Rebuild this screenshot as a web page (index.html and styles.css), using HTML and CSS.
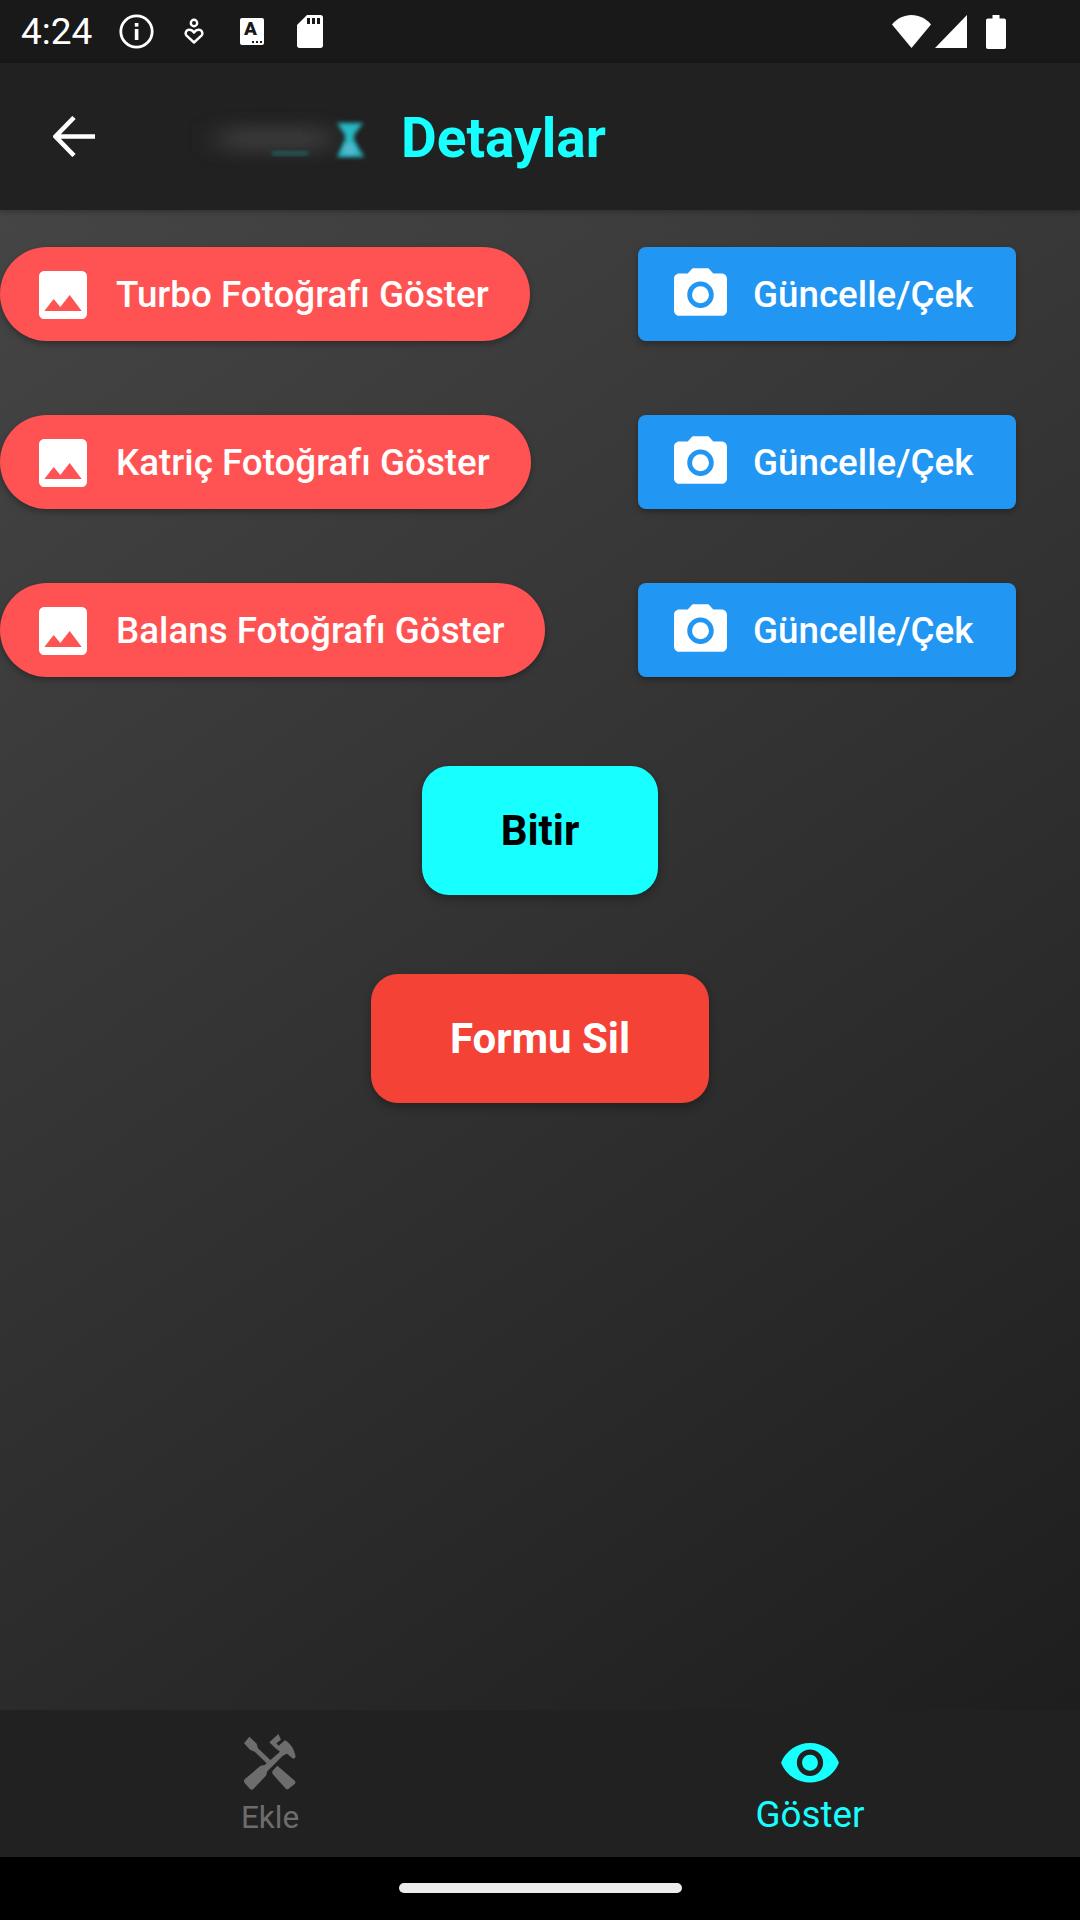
FILE: index.html
```html
<!DOCTYPE html>
<html lang="tr">
<head>
    <meta charset="UTF-8">
    <meta name="viewport" content="width=device-width, initial-scale=1.0">
    <title>Detaylar</title>
    <link rel="stylesheet" href="styles.css">
</head>
<body>
    <div class="app">
        <div class="status-bar">
            <span class="time">4:24</span>
            <svg class="st-info" viewBox="0 0 35 35"><circle cx="17.5" cy="17.5" r="15.7" fill="none" stroke="#fff" stroke-width="2.8"/><rect x="15.8" y="15" width="3.6" height="11" fill="#fff"/><rect x="15.8" y="9" width="3.6" height="3.6" fill="#fff"/></svg>
            <svg class="st-heart" viewBox="0 0 20 27"><circle cx="10" cy="5" r="3.2" fill="none" stroke="#fff" stroke-width="2.4"/><path d="M10 24.5L2.6 17.6C.6 15.6 2 11.8 5.2 11.8 7.4 11.8 9 13 10 14.6 11 13 12.6 11.8 14.8 11.8 18 11.8 19.4 15.6 17.4 17.6Z" fill="none" stroke="#fff" stroke-width="2.4" stroke-linejoin="round"/></svg>
            <div class="st-card">
                <span class="st-card-letter">A</span>
                <span class="st-card-dots"></span>
            </div>
            <svg class="st-sd" viewBox="0 0 26 33"><path d="M10 0H23.5C25 0 26 1 26 2.5V30.5C26 32 25 33 23.5 33H2.5C1 33 0 32 0 30.5V10Z" fill="#fff"/><rect x="10" y="3" width="3" height="6" fill="#191919"/><rect x="15" y="3" width="3" height="6" fill="#191919"/><rect x="20" y="3" width="3" height="6" fill="#191919"/></svg>
            <div class="status-right">
                <svg class="st-wifi" viewBox="0 0 39 33"><path d="M19.500 33L0 9.500C5 3.500 12 0 19.500 0S34 3.500 39 9.500Z" fill="#fff"/></svg>
                <svg class="st-signal" viewBox="0 0 32 33"><path d="M32 0V33H0Z" fill="#fff"/></svg>
                <svg class="st-battery" viewBox="0 0 20 34"><path d="M6.500 0H13.500V3.500H18C19.200 3.500 20 4.300 20 5.500V32C20 33.200 19.200 34 18 34H2C.8 34 0 33.200 0 32V5.500C0 4.300 .8 3.500 2 3.500H6.500Z" fill="#fff"/></svg>
            </div>
        </div>

        <header class="app-bar">
            <svg class="back" viewBox="0 0 42 41"><path d="M42 20.500H3M21 1.500L2.500 20.500 21 39.500" fill="none" stroke="#fff" stroke-width="4.600"/></svg>
            <!-- logo is blurred out in the original -->
            <svg class="logo" viewBox="0 0 220 70">
                <defs>
                    <filter id="blur-wide" x="-30%" y="-100%" width="160%" height="300%"><feGaussianBlur stdDeviation="16 8"/></filter>
                    <filter id="blur-thin" x="-50%" y="-50%" width="200%" height="200%"><feGaussianBlur stdDeviation="2"/></filter>
                </defs>
                <rect x="40" y="24" width="110" height="26" fill="#484848" opacity=".6" filter="url(#blur-wide)"/>
                <rect x="92" y="50" width="36" height="3" fill="#1f8b8b" opacity=".7" filter="url(#blur-thin)"/>
                <path d="M157 21H183L174 33V38L184 55H157L165 38V33Z" fill="#26b8c4" filter="url(#blur-thin)"/>
                <path d="M165 42H173L176 52H163Z" fill="#6fb6d0" opacity=".7" filter="url(#blur-thin)"/>
            </svg>
            <h1 class="title">Detaylar</h1>
        </header>

        <main class="content">
            <div class="photo-row">
                <button class="btn-show">
                    <svg class="ic-image" viewBox="3 3 18 18"><path d="M21 19V5c0-1.100-.9-2-2-2H5c-1.100 0-2 .9-2 2v14c0 1.100.9 2 2 2h14c1.100 0 2-.9 2-2zM8.500 13.500l2.500 3.010L14.500 12l4.500 6H5l3.500-4.500z"/></svg>
                    Turbo Fotoğrafı Göster
                </button>
                <button class="btn-update">
                    <svg class="ic-camera" viewBox="2 2 20 18"><circle cx="12" cy="12" r="3.200"/><path d="M9 2L7.170 4H4c-1.100 0-2 .9-2 2v12c0 1.100.9 2 2 2h16c1.100 0 2-.9 2-2V6c0-1.100-.9-2-2-2h-3.170L15 2H9zm3 15c-2.760 0-5-2.240-5-5s2.240-5 5-5 5 2.240 5 5-2.240 5-5 5z"/></svg>
                    Güncelle/Çek
                </button>
            </div>
            <div class="photo-row">
                <button class="btn-show">
                    <svg class="ic-image" viewBox="3 3 18 18"><path d="M21 19V5c0-1.100-.9-2-2-2H5c-1.100 0-2 .9-2 2v14c0 1.100.9 2 2 2h14c1.100 0 2-.9 2-2zM8.500 13.500l2.500 3.010L14.500 12l4.500 6H5l3.500-4.500z"/></svg>
                    Katriç Fotoğrafı Göster
                </button>
                <button class="btn-update">
                    <svg class="ic-camera" viewBox="2 2 20 18"><circle cx="12" cy="12" r="3.200"/><path d="M9 2L7.170 4H4c-1.100 0-2 .9-2 2v12c0 1.100.9 2 2 2h16c1.100 0 2-.9 2-2V6c0-1.100-.9-2-2-2h-3.170L15 2H9zm3 15c-2.760 0-5-2.240-5-5s2.240-5 5-5 5 2.240 5 5-2.240 5-5 5z"/></svg>
                    Güncelle/Çek
                </button>
            </div>
            <div class="photo-row">
                <button class="btn-show">
                    <svg class="ic-image" viewBox="3 3 18 18"><path d="M21 19V5c0-1.100-.9-2-2-2H5c-1.100 0-2 .9-2 2v14c0 1.100.9 2 2 2h14c1.100 0 2-.9 2-2zM8.500 13.500l2.500 3.010L14.500 12l4.500 6H5l3.500-4.500z"/></svg>
                    Balans Fotoğrafı Göster
                </button>
                <button class="btn-update">
                    <svg class="ic-camera" viewBox="2 2 20 18"><circle cx="12" cy="12" r="3.200"/><path d="M9 2L7.170 4H4c-1.100 0-2 .9-2 2v12c0 1.100.9 2 2 2h16c1.100 0 2-.9 2-2V6c0-1.100-.9-2-2-2h-3.170L15 2H9zm3 15c-2.760 0-5-2.240-5-5s2.240-5 5-5 5 2.240 5 5-2.240 5-5 5z"/></svg>
                    Güncelle/Çek
                </button>
            </div>

            <div class="actions">
                <button class="btn-action finish">Bitir</button>
                <button class="btn-action remove">Formu Sil</button>
            </div>
        </main>

        <nav class="bottom-nav">
            <div class="nav-item">
                <svg class="ic-tools" viewBox="0 0 240 210">
                    <path d="M58 35L80 56 84 70 128 112 118 122 74 80 60 74 42 55Z"/>
                    <path d="M142 122L195 168Q198 172 195 176L175 192Q170 195 166 190L128 147Q125 142 128 137Z"/>
                    <path d="M118 52L145 27 153 44 139 55 146 62 165 46C182 56 194 74 197 96L190 102 171 86 157 93 163 88 112 139 108 152 70 192Q65 196 60 192L44 174Q40 168 44 163L92 122 104 120 150 80 135 68Z"/>
                </svg>
                <span class="nav-label">Ekle</span>
            </div>
            <div class="nav-item active">
                <svg class="ic-eye" viewBox="1 4.500 22 15"><path d="M12 4.500C7 4.500 2.730 7.610 1 12c1.730 4.390 6 7.500 11 7.500s9.270-3.110 11-7.500c-1.730-4.390-6-7.500-11-7.500zM12 17c-2.760 0-5-2.240-5-5s2.240-5 5-5 5 2.240 5 5-2.240 5-5 5zm0-8c-1.660 0-3 1.340-3 3s1.340 3 3 3 3-1.340 3-3-1.340-3-3-3z"/></svg>
                <span class="nav-label">Göster</span>
            </div>
        </nav>

        <div class="home-bar">
            <div class="home-handle"></div>
        </div>
    </div>
</body>
</html>
```

FILE: styles.css
```css
body {
    margin: 0;
    font-family: 'Roboto', sans-serif;
    background: #000;
}

.app {
    width: 1080px;
    height: 1920px;
    display: flex;
    flex-direction: column;
    overflow: hidden;
}

/* Status bar */
.status-bar {
    height: 63px;
    flex: none;
    background: #191919;
    display: flex;
    align-items: center;
    padding: 0 74px 0 21px;
    box-sizing: border-box;
    color: #fff;
}

.time {
    width: 98px;
    font-size: 37px;
    line-height: 63px;
}

.st-info {
    width: 35px;
    height: 35px;
}

.st-heart {
    width: 20px;
    height: 27px;
    margin-left: 30px;
}

.st-card {
    position: relative;
    width: 24px;
    height: 27px;
    margin-left: 36px;
    background: #fff;
    border-radius: 2px;
    color: #191919;
    font-size: 19px;
    font-weight: 900;
    line-height: 22px;
    text-align: center;
}

.st-card-letter {
    display: block;
    margin-left: -3px;
}

.st-card-dots {
    position: absolute;
    right: 2px;
    bottom: 2px;
    width: 10px;
    height: 2px;
    background: repeating-linear-gradient(90deg, #191919 0 2px, transparent 2px 4px);
}

.st-sd {
    width: 26px;
    height: 33px;
    margin-left: 33px;
}

.status-right {
    margin-left: auto;
    display: flex;
    align-items: center;
}

.st-wifi {
    width: 39px;
    height: 33px;
}

.st-signal {
    width: 32px;
    height: 33px;
    margin-left: 4px;
}

.st-battery {
    width: 20px;
    height: 34px;
    margin-left: 19px;
}

/* App bar */
.app-bar {
    position: relative;
    z-index: 1;
    height: 147px;
    flex: none;
    background: #212121;
    display: flex;
    align-items: center;
    padding-left: 53px;
    box-sizing: border-box;
    box-shadow: 0 2px 5px rgba(0, 0, 0, 0.25);
}

.back {
    width: 42px;
    height: 41px;
    flex: none;
}

.logo {
    width: 220px;
    height: 70px;
    flex: none;
    margin-left: 85px;
}

.title {
    margin: 2px 0 0 1px;
    font-size: 55px;
    font-weight: 700;
    color: #18ffff;
}

/* Main area */
.content {
    flex: 1;
    padding-top: 37px;
    background: linear-gradient(145deg, #454545 0%, #1e1e1e 100%);
    display: flex;
    flex-direction: column;
    gap: 74px;
}

.photo-row {
    display: flex;
    align-items: center;
    justify-content: space-between;
    padding-right: 64px;
}

button {
    border: none;
    font-family: inherit;
    cursor: pointer;
}

.btn-show,
.btn-update {
    height: 94px;
    display: flex;
    align-items: center;
    color: #fff;
    font-size: 36.750px;
    font-weight: 500;
    box-shadow: 0 3px 6px rgba(0, 0, 0, 0.3);
}

.btn-show {
    padding: 0 41px 0 39px;
    gap: 29px;
    background: #ff5252;
    border-radius: 47px;
}

.btn-update {
    width: 378px;
    padding: 0 0 0 36px;
    gap: 26px;
    background: #2196f3;
    border-radius: 8px;
}

.ic-image {
    width: 48px;
    height: 48px;
    margin-top: 1px;
    fill: #fff;
}

.ic-camera {
    width: 53px;
    height: 48px;
    margin-bottom: 4px;
    fill: #fff;
}

.actions {
    display: flex;
    flex-direction: column;
    align-items: center;
    gap: 79px;
    margin-top: 15px;
}

.btn-action {
    height: 129px;
    padding: 0 79px;
    border-radius: 27px;
    font-size: 42px;
    font-weight: 700;
    box-shadow: 0 4px 10px rgba(0, 0, 0, 0.3);
}

.finish {
    background: #18ffff;
    color: #000;
}

.remove {
    background: #f44336;
    color: #fff;
}

/* Bottom nav */
.bottom-nav {
    height: 147px;
    flex: none;
    background: #212121;
    display: grid;
    grid-template-columns: 1fr 1fr;
}

.nav-item {
    display: flex;
    flex-direction: column;
    align-items: center;
    color: #6d6d6d;
}

.ic-tools {
    width: 80px;
    height: 70px;
    margin-top: 15px;
    fill: #6d6d6d;
}

.nav-item .nav-label {
    font-size: 31.500px;
    line-height: 36px;
    margin-top: 5px;
}

.nav-item.active {
    color: #18ffff;
}

.ic-eye {
    width: 58px;
    height: 39.500px;
    margin-top: 33px;
    fill: #18ffff;
}

.nav-item.active .nav-label {
    font-size: 36.750px;
    line-height: 42px;
    margin-top: 11px;
}

/* Gesture bar */
.home-bar {
    height: 63px;
    flex: none;
    background: #000;
    display: flex;
    justify-content: center;
    padding-top: 26px;
    box-sizing: border-box;
}

.home-handle {
    width: 283px;
    height: 10px;
    border-radius: 5px;
    background: #ececec;
}
```
